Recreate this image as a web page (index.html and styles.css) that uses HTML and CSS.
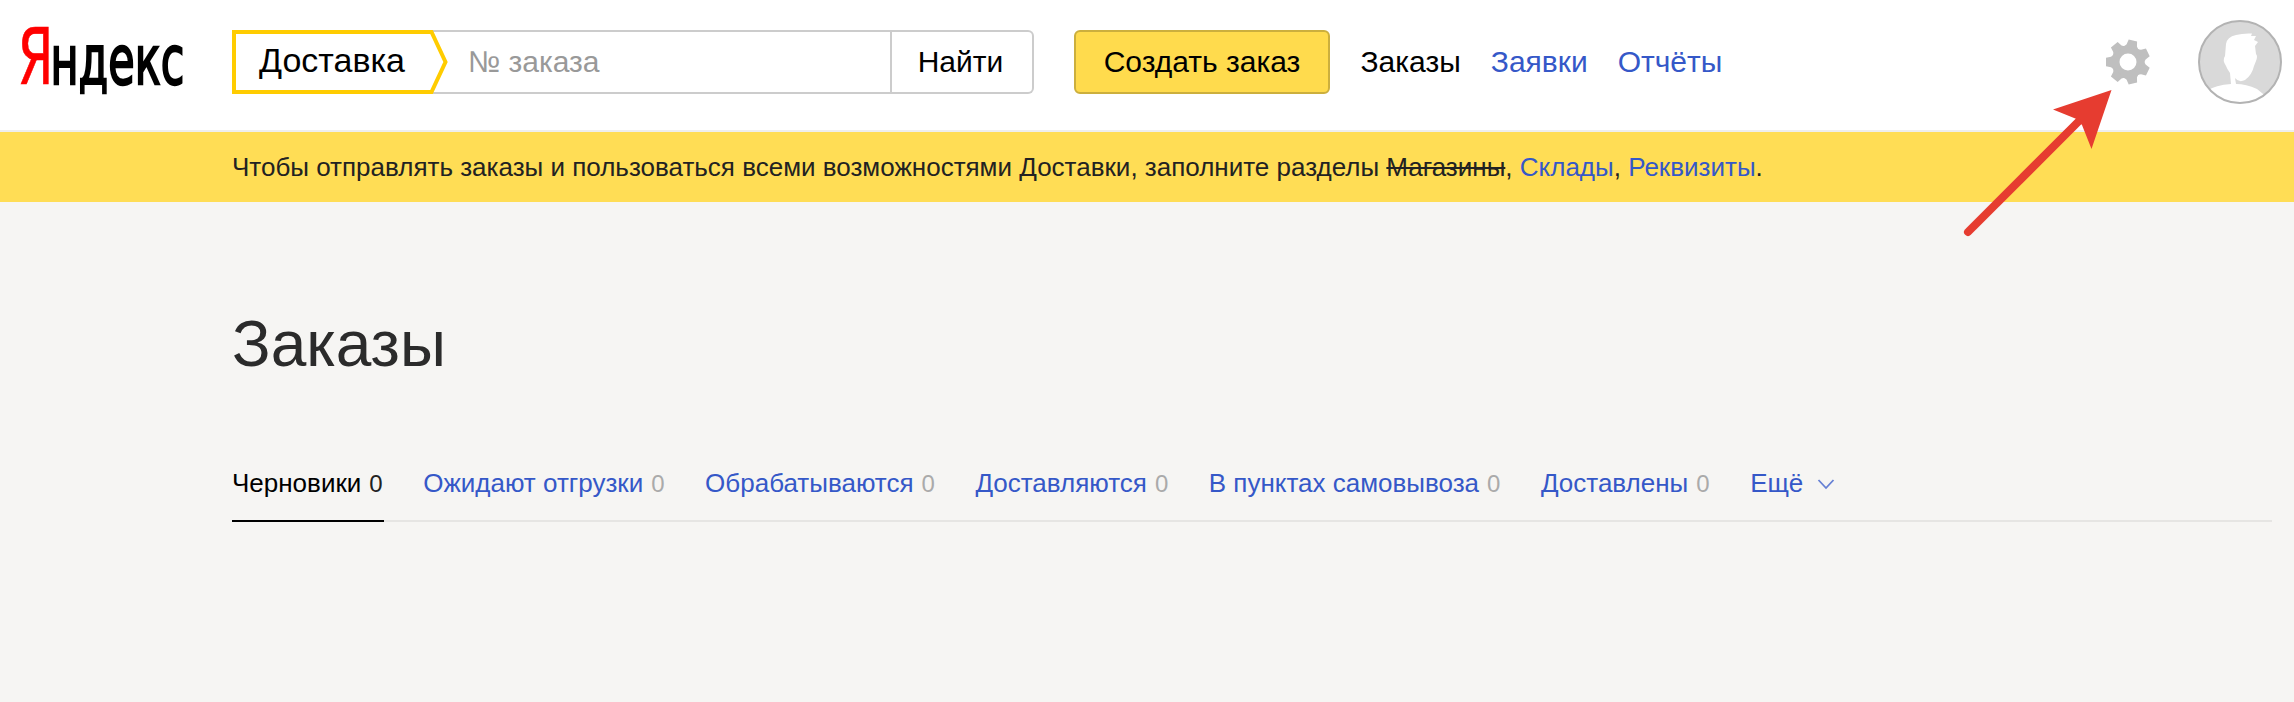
FILE: index.html
```html
<!DOCTYPE html>
<html lang="ru">
<head>
<meta charset="utf-8">
<title>Яндекс Доставка — Заказы</title>
<link rel="stylesheet" href="styles.css">
</head>
<body>
<header class="header">
  <svg class="logo" width="190" height="130" viewBox="0 0 190 130" role="img" aria-label="Яндекс">
    <g transform="translate(17.500 84) scale(.66 1)"><text class="logo-first" textLength="54.500" lengthAdjust="spacingAndGlyphs">Я</text></g>
    <g transform="translate(50.500 84) scale(.64 1)"><text class="logo-rest" textLength="209" lengthAdjust="spacingAndGlyphs">ндекс</text></g>
  </svg>
  <form class="search">
    <div class="service">
      <svg class="service-frame" width="216" height="64" viewBox="0 0 216 64"><path d="M2 2H199.500L213.500 32L199.500 62H2Z"/></svg>
      <span class="service-name">Доставка</span>
    </div>
    <div class="search-field">№ заказа</div>
    <div class="search-button">Найти</div>
  </form>
  <a class="create">Создать заказ</a>
  <nav class="nav">
    <a class="nav-current">Заказы</a>
    <a>Заявки</a>
    <a>Отчёты</a>
  </nav>
  <div class="user">
    <svg class="gear" width="46" height="46" viewBox="-23 -23 46 46">
      <defs><path id="tooth" d="M-7.500 -14L-5.300 -17L-4.300 -22H4.300L5.300 -17L7.500 -14Z"/></defs>
      <circle r="12.500"/>
      <use href="#tooth" transform="rotate(-90)"/>
      <use href="#tooth" transform="rotate(-38.570)"/>
      <use href="#tooth" transform="rotate(12.860)"/>
      <use href="#tooth" transform="rotate(64.290)"/>
      <use href="#tooth" transform="rotate(115.710)"/>
      <use href="#tooth" transform="rotate(167.140)"/>
      <use href="#tooth" transform="rotate(218.570)"/>
    </svg>
    <svg class="avatar" width="84" height="84" viewBox="0 0 84 84">
      <defs><clipPath id="disc"><circle cx="42" cy="42" r="41"/></clipPath></defs>
      <circle cx="42" cy="42" r="41.500" fill="#d9d9d9"/>
      <g clip-path="url(#disc)"><path class="person" d="M28 24Q29 17 38 15Q45 13 54 13.500L53 16L58 16L56 20L60 22L57 26L58 34Q60 36 58 41L56 46Q54 55 47 60Q41 63 37 58L38 64Q48 64 59 69L70 78V84H8V71Q18 65 33 64L32 53Q29 49 28 46Q24 40 27 36Z"/></g>
      <circle class="ring" cx="42" cy="42" r="41"/>
    </svg>
  </div>
</header>
<div class="notice">Чтобы отправлять заказы и пользоваться всеми возможностями Доставки, заполните разделы <s>Магазины</s>, <a>Склады</a>, <a>Реквизиты</a>.</div>
<main class="content">
  <h1 class="title">Заказы</h1>
  <div class="tabs">
    <div class="tab tab-current">Черновики<span class="count">0</span></div>
    <div class="tab">Ожидают отгрузки<span class="count">0</span></div>
    <div class="tab">Обрабатываются<span class="count">0</span></div>
    <div class="tab">Доставляются<span class="count">0</span></div>
    <div class="tab">В пунктах самовывоза<span class="count">0</span></div>
    <div class="tab">Доставлены<span class="count">0</span></div>
    <div class="tab">Ещё<svg class="chevron" width="18" height="12" viewBox="0 0 18 12"><path d="M1.500 1L9 9L16.500 1"/></svg></div>
  </div>
</main>
<svg class="arrow" width="162" height="160" viewBox="0 0 162 160"><path class="arrow-line" d="M18 152L130 40"/><path d="M161.500 10L103 29.500L126.500 39L132 45L141.500 69Z"/></svg>
</body>
</html>
```
FILE: styles.css
```css
* { box-sizing: border-box; }
body { margin: 0; min-height: 702px; position: relative; background: #f6f5f3; font-family: "Liberation Sans", Arial, sans-serif; color: #000; }
a { color: #3558c8; }
.header { display: flex; align-items: flex-start; height: 132px; background: #fff; border-bottom: 2px solid #eee; }
.logo { flex: none; margin-right: 42px; font-family: "DejaVu Sans", sans-serif; }
.logo-first { font-size: 78px; fill: #f00; stroke: #f00; stroke-width: .6; }
.logo-rest { font-size: 67.5px; fill: #000; stroke: #000; stroke-width: 2.4; }
.search { display: flex; width: 802px; height: 64px; margin: 30px 40px 0 0; border: 2px solid #ccc; border-left: 0; border-radius: 6px; font-size: 30px; line-height: 60px; }
.service { position: relative; flex: none; width: 216px; height: 64px; margin-top: -2px; padding-left: 27px; font-size: 34px; line-height: 61px; }
.service-frame { position: absolute; left: 0; top: 0; fill: #fff; stroke: #fc0; stroke-width: 4; }
.service-name { position: relative; }
.search-field { width: 442px; padding-left: 20px; color: #999; }
.search-button { flex: 1; padding-right: 3px; border-left: 2px solid #ccc; text-align: center; }
.create { width: 256px; height: 64px; margin-top: 30px; background: #ffdb4d; border: 2px solid #ccaf3d; border-radius: 6px; color: #000; font-size: 30px; line-height: 60px; text-align: center; }
.nav { display: flex; gap: 30px; margin: 32px 0 0 30.5px; font-size: 30px; line-height: 60px; }
.nav-current { color: #000; }
.user { display: flex; gap: 47px; align-items: center; margin: 20px 12px 0 auto; height: 84px; }
.gear { fill: none; }
.gear circle { stroke: #bfbfbf; stroke-width: 8; }
.gear use { fill: #bfbfbf; }
.person { fill: #fff; filter: blur(.6px); }
.ring { fill: none; stroke: #b3b3b3; stroke-width: 2; }
.notice { height: 70px; padding-left: 232px; background: #ffdd55; color: #222; font-size: 26px; line-height: 70px; white-space: nowrap; }
.content { padding: 98px 22px 0 232px; }
.title { margin: 0; color: #2b2b2b; font-size: 64px; font-weight: 400; line-height: 88px; }
.tabs { display: flex; gap: 39.6px; height: 82px; margin-top: 52px; padding-top: 2px; border-bottom: 2px solid #e6e5e3; white-space: nowrap; }
.tab { height: 80px; padding-right: .9px; color: #3558c8; font-size: 26px; line-height: 82px; }
.tab-current { color: #000; border-bottom: 2px solid #000; }
.count { margin-left: 8px; color: #aaa; font-size: 24px; }
.tab-current .count { color: #222; }
.chevron { margin-left: 14px; vertical-align: 1px; fill: none; stroke: #6680d4; stroke-width: 1.8; }
.arrow { position: absolute; left: 1950px; top: 80px; fill: #e63c30; }
.arrow-line { stroke: #e63c30; stroke-width: 8; stroke-linecap: round; }
```
